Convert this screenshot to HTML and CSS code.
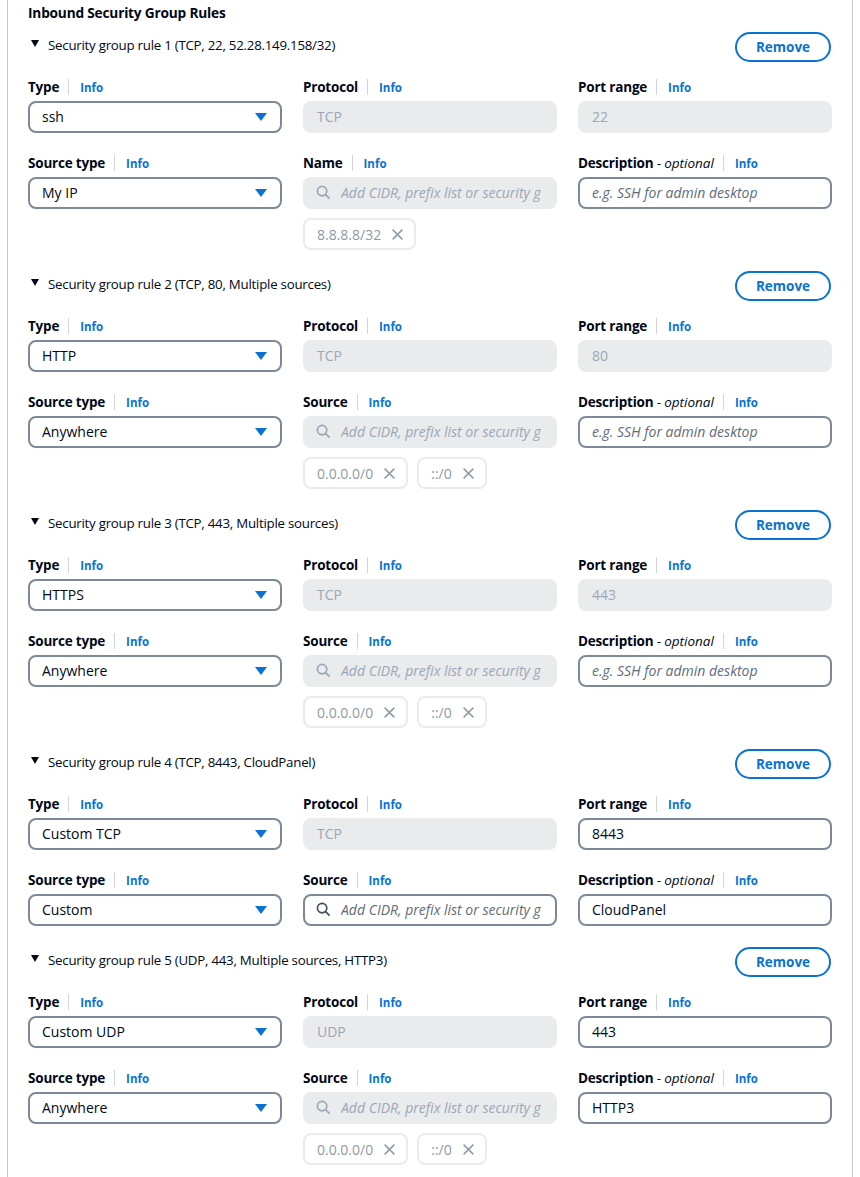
FILE: index.html
```html
<!DOCTYPE html>
<html>
<head>
<meta charset="utf-8">
<link rel="stylesheet" href="styles.css">
</head>
<body>
<div class="panel">
  <h2 class="title">Inbound Security Group Rules</h2>

  <section class="rule">
    <div class="rule-head">
      <div class="rule-name"><span class="tri"></span>Security group rule 1 (TCP, 22, 52.28.149.158/32)</div>
      <button class="btn">Remove</button>
    </div>
    <div class="grid">
      <div class="field"><div class="label"><b>Type</b><i class="sep"></i><a>Info</a></div><div class="select">ssh<span class="caret"></span></div></div>
      <div class="field"><div class="label"><b>Protocol</b><i class="sep"></i><a>Info</a></div><div class="input disabled">TCP</div></div>
      <div class="field"><div class="label"><b>Port range</b><i class="sep"></i><a>Info</a></div><div class="input disabled">22</div></div>
      <div class="field"><div class="label"><b>Source type</b><i class="sep"></i><a>Info</a></div><div class="select">My IP<span class="caret"></span></div></div>
      <div class="field"><div class="label"><b>Name</b><i class="sep"></i><a>Info</a></div>
        <div class="input search disabled"><svg class="mag" viewBox="0 0 16 16"><circle cx="6.5" cy="6.5" r="5" /><path d="M10.2 10.2 L14.5 14.5"/></svg><span class="ph">Add CIDR, prefix list or security g</span></div>
        <div class="tokens"><span class="token">8.8.8.8/32<svg class="x" viewBox="0 0 16 16"><path d="M2 2 L14 14 M14 2 L2 14"/></svg></span></div>
      </div>
      <div class="field"><div class="label"><b>Description</b>&nbsp;-&nbsp;<em>optional</em><i class="sep"></i><a>Info</a></div><div class="input"><span class="ph dark">e.g. SSH for admin desktop</span></div></div>
    </div>
  </section>

  <section class="rule">
    <div class="rule-head">
      <div class="rule-name"><span class="tri"></span>Security group rule 2 (TCP, 80, Multiple sources)</div>
      <button class="btn">Remove</button>
    </div>
    <div class="grid">
      <div class="field"><div class="label"><b>Type</b><i class="sep"></i><a>Info</a></div><div class="select">HTTP<span class="caret"></span></div></div>
      <div class="field"><div class="label"><b>Protocol</b><i class="sep"></i><a>Info</a></div><div class="input disabled">TCP</div></div>
      <div class="field"><div class="label"><b>Port range</b><i class="sep"></i><a>Info</a></div><div class="input disabled">80</div></div>
      <div class="field"><div class="label"><b>Source type</b><i class="sep"></i><a>Info</a></div><div class="select">Anywhere<span class="caret"></span></div></div>
      <div class="field"><div class="label"><b>Source</b><i class="sep"></i><a>Info</a></div>
        <div class="input search disabled"><svg class="mag" viewBox="0 0 16 16"><circle cx="6.5" cy="6.5" r="5" /><path d="M10.2 10.2 L14.5 14.5"/></svg><span class="ph">Add CIDR, prefix list or security g</span></div>
        <div class="tokens"><span class="token">0.0.0.0/0<svg class="x" viewBox="0 0 16 16"><path d="M2 2 L14 14 M14 2 L2 14"/></svg></span><span class="token">::/0<svg class="x" viewBox="0 0 16 16"><path d="M2 2 L14 14 M14 2 L2 14"/></svg></span></div>
      </div>
      <div class="field"><div class="label"><b>Description</b>&nbsp;-&nbsp;<em>optional</em><i class="sep"></i><a>Info</a></div><div class="input"><span class="ph dark">e.g. SSH for admin desktop</span></div></div>
    </div>
  </section>

  <section class="rule">
    <div class="rule-head">
      <div class="rule-name"><span class="tri"></span>Security group rule 3 (TCP, 443, Multiple sources)</div>
      <button class="btn">Remove</button>
    </div>
    <div class="grid">
      <div class="field"><div class="label"><b>Type</b><i class="sep"></i><a>Info</a></div><div class="select">HTTPS<span class="caret"></span></div></div>
      <div class="field"><div class="label"><b>Protocol</b><i class="sep"></i><a>Info</a></div><div class="input disabled">TCP</div></div>
      <div class="field"><div class="label"><b>Port range</b><i class="sep"></i><a>Info</a></div><div class="input disabled">443</div></div>
      <div class="field"><div class="label"><b>Source type</b><i class="sep"></i><a>Info</a></div><div class="select">Anywhere<span class="caret"></span></div></div>
      <div class="field"><div class="label"><b>Source</b><i class="sep"></i><a>Info</a></div>
        <div class="input search disabled"><svg class="mag" viewBox="0 0 16 16"><circle cx="6.5" cy="6.5" r="5" /><path d="M10.2 10.2 L14.5 14.5"/></svg><span class="ph">Add CIDR, prefix list or security g</span></div>
        <div class="tokens"><span class="token">0.0.0.0/0<svg class="x" viewBox="0 0 16 16"><path d="M2 2 L14 14 M14 2 L2 14"/></svg></span><span class="token">::/0<svg class="x" viewBox="0 0 16 16"><path d="M2 2 L14 14 M14 2 L2 14"/></svg></span></div>
      </div>
      <div class="field"><div class="label"><b>Description</b>&nbsp;-&nbsp;<em>optional</em><i class="sep"></i><a>Info</a></div><div class="input"><span class="ph dark">e.g. SSH for admin desktop</span></div></div>
    </div>
  </section>

  <section class="rule">
    <div class="rule-head">
      <div class="rule-name"><span class="tri"></span>Security group rule 4 (TCP, 8443, CloudPanel)</div>
      <button class="btn">Remove</button>
    </div>
    <div class="grid">
      <div class="field"><div class="label"><b>Type</b><i class="sep"></i><a>Info</a></div><div class="select">Custom TCP<span class="caret"></span></div></div>
      <div class="field"><div class="label"><b>Protocol</b><i class="sep"></i><a>Info</a></div><div class="input disabled">TCP</div></div>
      <div class="field"><div class="label"><b>Port range</b><i class="sep"></i><a>Info</a></div><div class="input">8443</div></div>
      <div class="field"><div class="label"><b>Source type</b><i class="sep"></i><a>Info</a></div><div class="select">Custom<span class="caret"></span></div></div>
      <div class="field"><div class="label"><b>Source</b><i class="sep"></i><a>Info</a></div>
        <div class="input search"><svg class="mag dark" viewBox="0 0 16 16"><circle cx="6.5" cy="6.5" r="5" /><path d="M10.2 10.2 L14.5 14.5"/></svg><span class="ph dark">Add CIDR, prefix list or security g</span></div>
      </div>
      <div class="field"><div class="label"><b>Description</b>&nbsp;-&nbsp;<em>optional</em><i class="sep"></i><a>Info</a></div><div class="input">CloudPanel</div></div>
    </div>
  </section>

  <section class="rule">
    <div class="rule-head">
      <div class="rule-name"><span class="tri"></span>Security group rule 5 (UDP, 443, Multiple sources, HTTP3)</div>
      <button class="btn">Remove</button>
    </div>
    <div class="grid">
      <div class="field"><div class="label"><b>Type</b><i class="sep"></i><a>Info</a></div><div class="select">Custom UDP<span class="caret"></span></div></div>
      <div class="field"><div class="label"><b>Protocol</b><i class="sep"></i><a>Info</a></div><div class="input disabled">UDP</div></div>
      <div class="field"><div class="label"><b>Port range</b><i class="sep"></i><a>Info</a></div><div class="input">443</div></div>
      <div class="field"><div class="label"><b>Source type</b><i class="sep"></i><a>Info</a></div><div class="select">Anywhere<span class="caret"></span></div></div>
      <div class="field"><div class="label"><b>Source</b><i class="sep"></i><a>Info</a></div>
        <div class="input search disabled"><svg class="mag" viewBox="0 0 16 16"><circle cx="6.5" cy="6.5" r="5" /><path d="M10.2 10.2 L14.5 14.5"/></svg><span class="ph">Add CIDR, prefix list or security g</span></div>
        <div class="tokens"><span class="token">0.0.0.0/0<svg class="x" viewBox="0 0 16 16"><path d="M2 2 L14 14 M14 2 L2 14"/></svg></span><span class="token">::/0<svg class="x" viewBox="0 0 16 16"><path d="M2 2 L14 14 M14 2 L2 14"/></svg></span></div>
      </div>
      <div class="field"><div class="label"><b>Description</b>&nbsp;-&nbsp;<em>optional</em><i class="sep"></i><a>Info</a></div><div class="input">HTTP3</div></div>
    </div>
  </section>
</div>
</body>
</html>
```

FILE: styles.css
```css
* { box-sizing: border-box; }
html, body { margin: 0; padding: 0; background: #fff; }
body {
  font-family: "Open Sans", "Noto Sans", sans-serif;
  color: #000716;
  font-size: 14px;
}
.panel {
  margin-left: 7px;
  width: 846px;
  min-height: 1177px;
  border-left: 1px solid #c6c6cd;
  border-right: 1px solid #c6c6cd;
  padding: 3px 20px 0 20px;
}
.title {
  margin: 0;
  font-size: 13.7px;
  font-weight: 700;
  line-height: 20px;
  height: 20px;
  letter-spacing: -0.2px;
}
.rule { padding-top: 9px; padding-bottom: 12px; }
.rule-head {
  display: flex;
  justify-content: space-between;
  align-items: center;
  height: 30px;
}
.rule-name {
  display: flex;
  align-items: center;
  font-size: 13.3px;
  letter-spacing: -0.25px;
  padding-bottom: 4px;
}
.tri {
  width: 0; height: 0;
  border-left: 4.5px solid transparent;
  border-right: 4.5px solid transparent;
  border-top: 7px solid #000716;
  margin: 0 9px 3px 3px;
}
.btn {
  width: 96px;
  height: 30px;
  border: 2px solid #0972d3;
  border-radius: 16px;
  background: #fff;
  color: #0972d3;
  font-family: inherit;
  font-weight: 700;
  font-size: 13.5px;
  padding: 0;
  margin-right: 1px;
}
.grid {
  display: grid;
  grid-template-columns: minmax(0, 1fr) minmax(0, 1fr) minmax(0, 1fr);
  column-gap: 21px;
  row-gap: 19px;
  margin-top: 14px;
}
.field { min-width: 0; }
.label {
  display: flex;
  align-items: center;
  height: 22px;
  margin-bottom: 3px;
  font-size: 13.5px;
  letter-spacing: -0.2px;
  white-space: nowrap;
}
.label b { font-weight: 700; }
.label em { font-style: italic; font-weight: 400; letter-spacing: 0; }
.sep {
  display: inline-block;
  width: 1px;
  height: 16px;
  background: #d1d5db;
  margin: 0 11px 0 9px;
}
.label a {
  color: #0972d3;
  font-weight: 700;
  font-size: 11.5px;
  letter-spacing: 0;
}
.select, .input {
  height: 32px;
  border: 2px solid #7d8998;
  border-radius: 8px;
  display: flex;
  align-items: center;
  padding: 0 12px 1px 12px;
  font-size: 14px;
  white-space: nowrap;
  overflow: hidden;
}
.select { justify-content: space-between; }
.caret {
  width: 0; height: 0;
  border-left: 6px solid transparent;
  border-right: 6px solid transparent;
  border-top: 8px solid #0972d3;
  margin-right: 1px;
}
.input.disabled {
  background: #e9ebed;
  border-color: #e9ebed;
  color: #9ba7b6;
}
.search { padding-left: 11px; padding-right: 12px; }
.mag {
  width: 15px; height: 15px;
  flex: none;
  fill: none;
  stroke: #9ba7b6;
  stroke-width: 1.8;
  margin-right: 10px;
}
.mag.dark { stroke: #414d5c; }
.ph {
  font-style: italic;
  color: #9ba7b6;
  overflow: hidden;
  white-space: nowrap;
  min-width: 0;
}
.ph.dark { color: #5f6b7a; }
.tokens {
  display: flex;
  gap: 9px;
  margin-top: 9px;
}
.token {
  display: inline-flex;
  align-items: center;
  height: 32px;
  padding: 0 10px 0 12px;
  border: 2px solid #e9ebed;
  border-radius: 8px;
  color: #8d99a8;
  font-size: 14px;
}
.x {
  width: 13px; height: 13px;
  margin-left: 10px;
  fill: none;
  stroke: #8d99a8;
  stroke-width: 1.8;
}
```
